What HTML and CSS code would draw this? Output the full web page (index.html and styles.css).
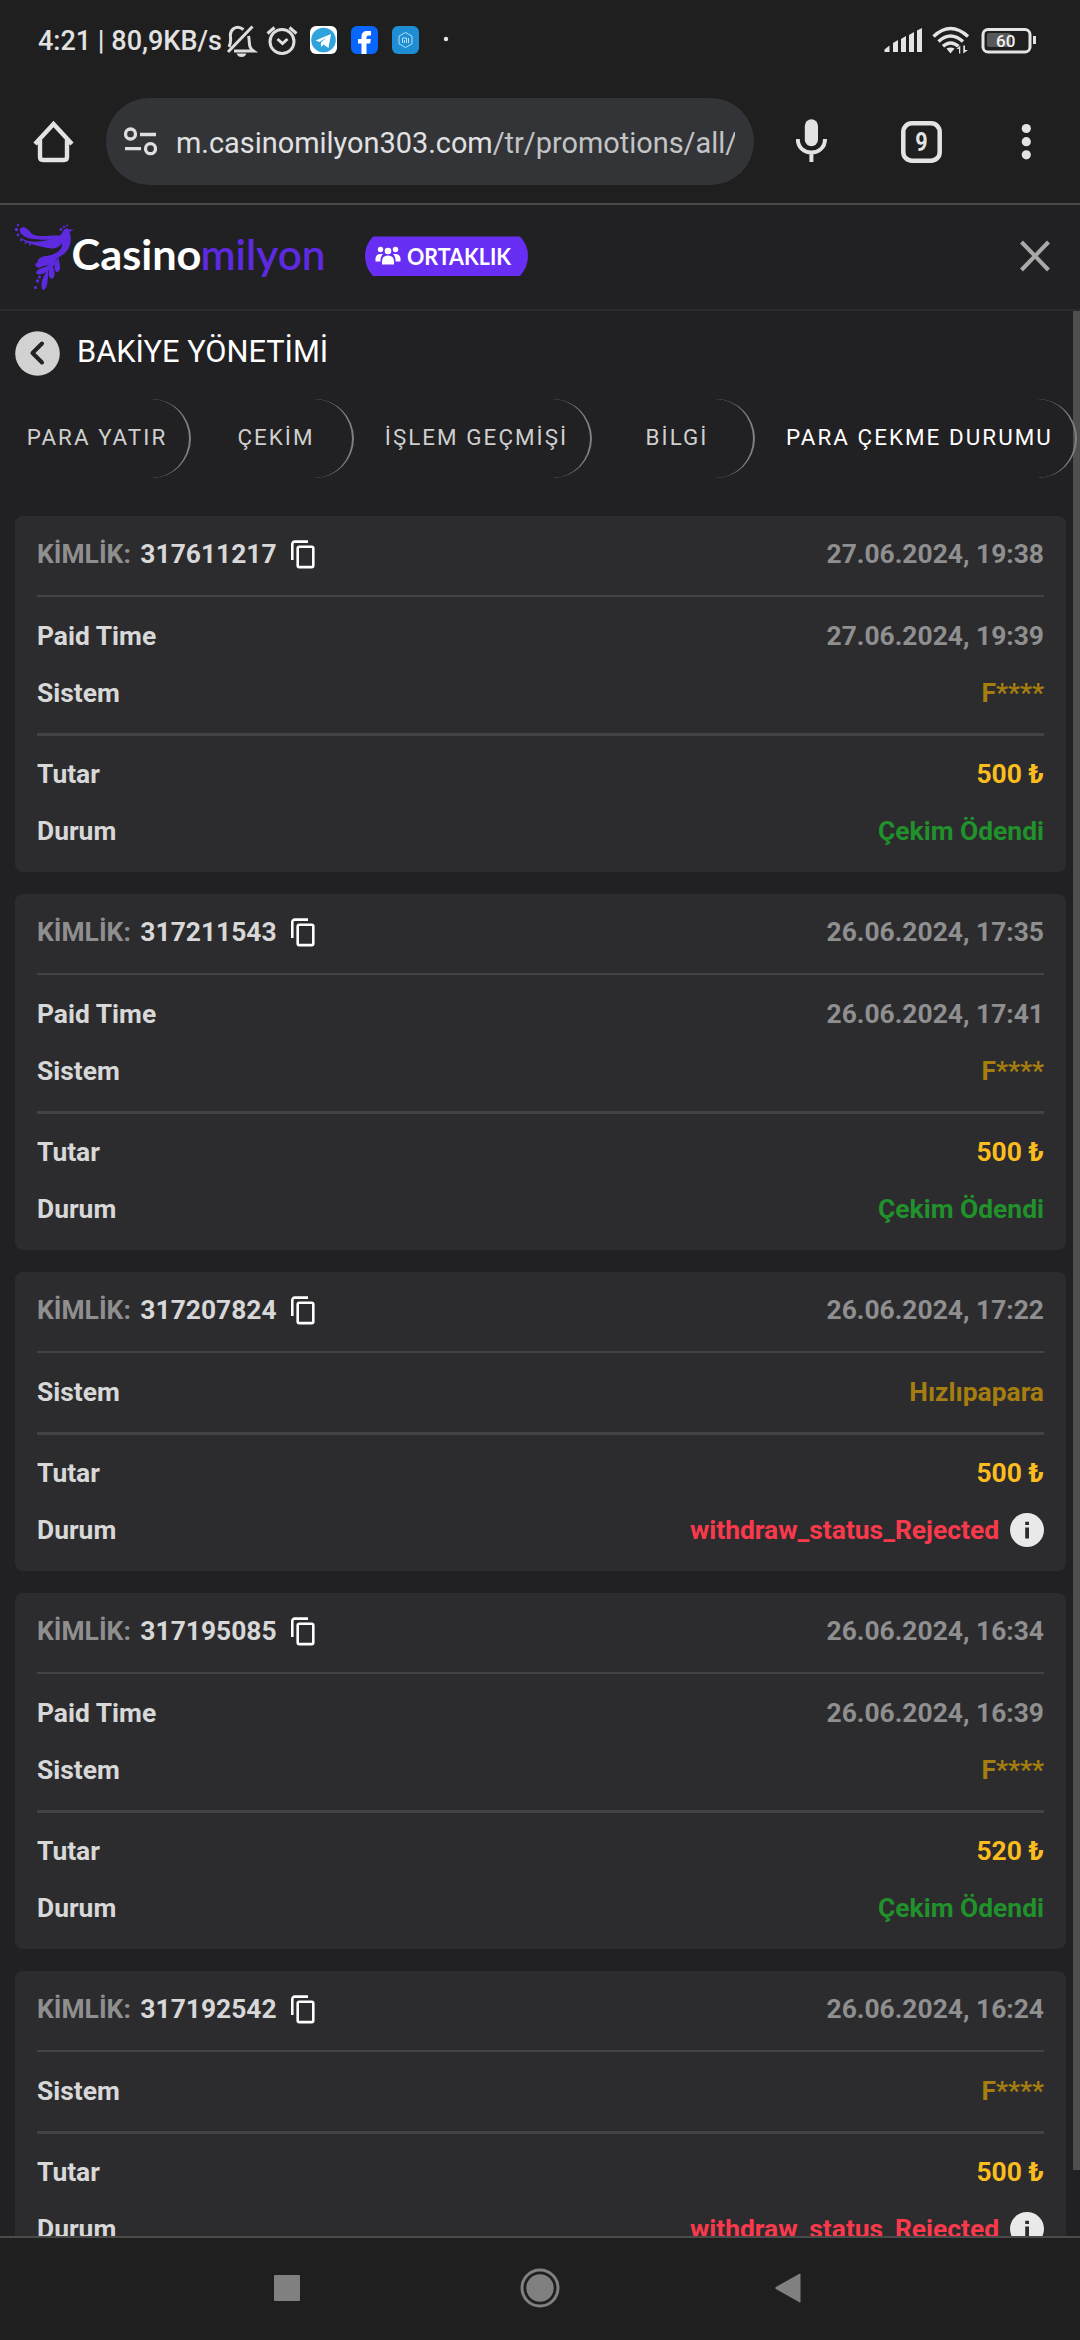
FILE: index.html
```html
<!DOCTYPE html>
<html lang="tr">
<head>
<meta charset="utf-8">
<title>Bakiye Yönetimi</title>
<link rel="stylesheet" href="styles.css">
</head>
<body>
<svg class="defs" aria-hidden="true">
  <symbol id="copy" viewBox="0 0 24 29">
    <path d="M1.3 20V4a2.4 2.4 0 0 1 2.4-2.4H17" fill="none" stroke="#fff" stroke-width="2.6"/>
    <rect x="6.7" y="6.7" width="15.6" height="20.4" rx="1.6" fill="none" stroke="#fff" stroke-width="2.6"/>
  </symbol>
  <symbol id="info" viewBox="0 0 34 34">
    <circle cx="17" cy="17" r="17" fill="#e9e9e9"/>
    <path d="M15.2 8.7h3.8v3.2h-3.8zM15.2 14.4h3.8v11h-3.8z" fill="#2c2c2e"/>
  </symbol>
</svg>
<div class="screen">
  <div class="status">
    <span class="clock">4:21 | 80,9KB/s</span>
    <svg class="notif" width="230" height="40" viewBox="220 20 230 40">
      <g fill="none" stroke="#dedede" stroke-width="3">
        <path d="M234 51H253.500C248 47 250 43 248.600 36M243.500 29.500C236 24 229.500 30 230.500 37C231 42 230.500 44 229 47"/>
        <path d="M228 52L252.500 26.500"/>
        <circle cx="282" cy="41.500" r="12"/>
        <path d="M267.500 33.500L274.500 27.500M289.500 27.500L296.500 33.500M277.500 39L282.500 43.500L287.500 39"/>
      </g>
      <path d="M236.500 53.500H246.500Q245 57 241.500 57Q238 57 236.500 53.500Z" fill="#dedede"/>
      <rect x="310" y="26" width="27" height="28" rx="6" fill="#fff"/>
      <circle cx="323.500" cy="40" r="12.300" fill="#2fa3db"/>
      <path d="M315.500 40.500L331 34L328.500 48L323.500 44.500L321 47V42.500L326.500 37.500L319.500 42Z" fill="#fff"/>
      <rect x="351" y="26" width="27" height="28" rx="6" fill="#0866ff"/>
      <path d="M361.500 54V43.500H358V39H361.500V36.500Q361.500 31 367 31H371V35.500H368.500Q366.500 35.500 366.500 37.500V39H370.800L370.200 43.500H366.500V54Z" fill="#fff"/>
      <rect x="392" y="26" width="27" height="28" rx="6" fill="#1d8ed3"/>
      <g fill="none" stroke="#b9e2fa">
        <path d="M405.500 32.500L412 36.200V43.800L405.500 47.500L399 43.800V36.200Z" stroke-width="1"/>
        <path d="M402.500 43V38H406.500V43M404.500 40V43M408.500 38V43" stroke-width="1"/>
      </g>
      <circle cx="446" cy="39" r="2.200" fill="#e6e6e6"/>
    </svg>
    <svg class="signals" width="156" height="32" viewBox="882 25 156 32">
      <g fill="#e4e4e4">
        <path d="M884.500 52V49.500L889.500 45.500V52ZM893 52V43L898 40V52ZM901 52V39L906 36V52ZM909 52V35L914 32V52ZM917 52V30.500L922 28V52Z"/>
        <path d="M946.500 48.500Q950.500 46.500 954.500 48.500L950.500 53.500Z"/>
        <path d="M959 53.500V49H956.500L960.300 45.500V53.500ZM963.300 53.500V45.500H965V50H968Z"/>
      </g>
      <g fill="none" stroke="#e4e4e4" stroke-width="3.400">
        <path d="M933.500 36.500Q950.500 20.500 968 36.500M938.500 41.500Q950.500 30.500 963 41.500M943 46.300Q950.500 39.500 958.500 46.300"/>
        <rect x="983" y="29.500" width="47" height="22.500" rx="5" stroke-width="3"/>
        <path d="M1034.500 36V44" stroke-width="3"/>
      </g>
      <rect x="987" y="33" width="24" height="14" rx="2" fill="#585858"/>
      <text x="996" y="47.300" textLength="19.500" class="battery">60</text>
    </svg>
  </div>

  <div class="toolbar">
    <svg class="home" width="42" height="44" viewBox="33 120 42 44">
      <path d="M35 144L53.500 124L72 144M40 140V157Q40 160 43 160H64Q67 160 67 157V140" fill="none" stroke="#e3e3e3" stroke-width="4.400"/>
    </svg>
    <div class="url">
      <svg width="34" height="30" viewBox="123 127 34 30">
        <g fill="none" stroke="#dfdfdf" stroke-width="3.300">
          <circle cx="130.500" cy="134" r="5"/><circle cx="150.500" cy="148.700" r="5"/>
          <path d="M140 134.500H156M125 148.700H141"/>
        </g>
      </svg>
      <span class="address">m.casinomilyon303.com<span class="path">/tr/promotions/all/</span></span>
    </div>
    <svg class="mic" width="32" height="44" viewBox="796 119 32 44">
      <rect x="804.800" y="119.300" width="13.200" height="27" rx="6.600" fill="#e3e3e3"/>
      <path d="M797.800 139C797.800 157 825 157 825 139M811.400 152V162" fill="none" stroke="#e3e3e3" stroke-width="4"/>
    </svg>
    <svg class="tabcount" width="41" height="42" viewBox="0 0 41 42">
      <rect x="2.300" y="2.300" width="36.400" height="37.400" rx="8.500" fill="none" stroke="#e3e3e3" stroke-width="4.500"/>
      <text x="14.300" y="29.800" textLength="12.400" lengthAdjust="spacingAndGlyphs">9</text>
    </svg>
    <svg class="more" width="10" height="38" viewBox="1021 123 10 38">
      <g fill="#e3e3e3"><circle cx="1026.300" cy="128.500" r="4.600"/><circle cx="1026.300" cy="141.700" r="4.600"/><circle cx="1026.300" cy="154.800" r="4.600"/></g>
    </svg>
  </div>

  <div class="site">
    <header class="brand">
      <svg width="520" height="80" viewBox="10 217 520 80">
        <g fill="#5d2ae0">
          <path d="M20 229C23 225 28 229 31 233C37 239 53 234 62 236C57 241 43 240 32 239C23 237 19 233 20 229Z"/>
          <path d="M20 237C30 245 45 241 56 238C62 235.500 62 232 64 230C66 227.500 68 228.500 69 229.500L74 229.500L69.500 232C72 239 71 247 65 253C59 259 46 261 39 267C35 261 39 257 46 256C55 255 63 250 62 243C58 250 50 249 43 247C31 244 24 243 20 237Z"/>
          <path d="M35 264C42 259 53 260 57 256C58 262 50 266 43 266C39 269 36 268 35 264Z"/>
          <path d="M36 272C41 266 49 268 54 261L56 263C50 270 43 276 37 274Z"/>
          <path d="M42 289C40 281 44 275 48 270C48 278 48 287 44 290Z"/>
          <path d="M49 269C47 278 52 281 54 277C56 273 53 268 52 264Z"/>
          <path d="M55 262C53 270 56 274 59 271C62 267 58 262 59 257Z"/>
          <circle cx="16.500" cy="229.500" r="1.700"/><circle cx="18" cy="225" r="1.200"/><circle cx="18" cy="235" r="1.400"/><circle cx="21" cy="240" r="1.200"/><circle cx="25.500" cy="243" r="1"/><circle cx="30" cy="244.500" r="1"/>
          <circle cx="61" cy="229.500" r="1.400"/><circle cx="64" cy="227" r="1.200"/><circle cx="67" cy="225.500" r="1"/>
          <circle cx="39.500" cy="277" r="1.500"/><circle cx="37.500" cy="281" r="1.700"/><circle cx="35.500" cy="287.500" r="1.500"/>
        </g>
        <text x="71.500" y="270" textLength="130" lengthAdjust="spacingAndGlyphs" class="logo logo-a">Casino</text>
        <text x="200.500" y="270" textLength="125" lengthAdjust="spacingAndGlyphs" class="logo logo-b">milyon</text>
        <path d="M373 236.500H520Q528 245 528 256Q528 267 520 276H373Q365 267 365 256Q365 245 373 236.500Z" fill="#692ef4"/>
        <g fill="#fff">
          <circle cx="388" cy="251" r="3.300"/><circle cx="380.500" cy="249.500" r="2.700"/><circle cx="395.500" cy="249.500" r="2.700"/>
          <path d="M382 264.500V261.500Q382 255.500 388 255.500Q394 255.500 394 261.500V264.500Z"/>
          <path d="M375.500 261.500Q374.500 254 380.500 254H383Q380 257 380.500 261.500ZM400.500 261.500Q401.500 254 395.500 254H393Q396 257 395.500 261.500Z"/>
        </g>
        <text x="407" y="264.500" textLength="104" lengthAdjust="spacingAndGlyphs" class="partner">ORTAKLIK</text>
      </svg>
      <svg width="32" height="32" viewBox="0 0 32 32"><path d="M2.500 2L29.500 30M29.500 2L2.500 30" stroke="#a9a9a9" stroke-width="4" fill="none"/></svg>
    </header>

    <main class="panel">
      <div class="heading">
        <svg width="45" height="45" viewBox="0 0 45 45"><circle cx="22.500" cy="22.500" r="22.300" fill="#d2d2d2"/><path d="M27 12.500L17.500 22L27 31.500" fill="none" stroke="#222" stroke-width="4" stroke-linecap="round" stroke-linejoin="round"/></svg>
        <h1>BAKİYE YÖNETİMİ</h1>
      </div>
      <nav class="tabs">
        <a>PARA YATIR</a><a>ÇEKİM</a><a>İŞLEM GEÇMİŞİ</a><a>BİLGİ</a><a class="active">PARA ÇEKME DURUMU</a>
      </nav>
      <div class="cards">
        <section class="card">
          <div class="group"><div class="row"><span><i>KİMLİK:</i> 317611217<svg class="copy"><use href="#copy"/></svg></span><span class="date">27.06.2024, 19:38</span></div></div>
          <div class="group"><div class="row"><span>Paid Time</span><span class="date">27.06.2024, 19:39</span></div><div class="row"><span>Sistem</span><span class="system">F****</span></div></div>
          <div class="group"><div class="row"><span>Tutar</span><span class="amount">500 ₺</span></div><div class="row"><span>Durum</span><span class="paid">Çekim Ödendi</span></div></div>
        </section>
        <section class="card">
          <div class="group"><div class="row"><span><i>KİMLİK:</i> 317211543<svg class="copy"><use href="#copy"/></svg></span><span class="date">26.06.2024, 17:35</span></div></div>
          <div class="group"><div class="row"><span>Paid Time</span><span class="date">26.06.2024, 17:41</span></div><div class="row"><span>Sistem</span><span class="system">F****</span></div></div>
          <div class="group"><div class="row"><span>Tutar</span><span class="amount">500 ₺</span></div><div class="row"><span>Durum</span><span class="paid">Çekim Ödendi</span></div></div>
        </section>
        <section class="card">
          <div class="group"><div class="row"><span><i>KİMLİK:</i> 317207824<svg class="copy"><use href="#copy"/></svg></span><span class="date">26.06.2024, 17:22</span></div></div>
          <div class="group"><div class="row"><span>Sistem</span><span class="system">Hızlıpapara</span></div></div>
          <div class="group"><div class="row"><span>Tutar</span><span class="amount">500 ₺</span></div><div class="row"><span>Durum</span><span class="rejected">withdraw_status_Rejected<svg class="info"><use href="#info"/></svg></span></div></div>
        </section>
        <section class="card">
          <div class="group"><div class="row"><span><i>KİMLİK:</i> 317195085<svg class="copy"><use href="#copy"/></svg></span><span class="date">26.06.2024, 16:34</span></div></div>
          <div class="group"><div class="row"><span>Paid Time</span><span class="date">26.06.2024, 16:39</span></div><div class="row"><span>Sistem</span><span class="system">F****</span></div></div>
          <div class="group"><div class="row"><span>Tutar</span><span class="amount">520 ₺</span></div><div class="row"><span>Durum</span><span class="paid">Çekim Ödendi</span></div></div>
        </section>
        <section class="card">
          <div class="group"><div class="row"><span><i>KİMLİK:</i> 317192542<svg class="copy"><use href="#copy"/></svg></span><span class="date">26.06.2024, 16:24</span></div></div>
          <div class="group"><div class="row"><span>Sistem</span><span class="system">F****</span></div></div>
          <div class="group"><div class="row"><span>Tutar</span><span class="amount">500 ₺</span></div><div class="row"><span>Durum</span><span class="rejected">withdraw_status_Rejected<svg class="info"><use href="#info"/></svg></span></div></div>
        </section>
      </div>
      <div class="scrollbar"></div>
    </main>
  </div>

  <div class="navbar">
    <svg width="26" height="26" viewBox="0 0 26 26"><rect width="26" height="26" rx="1" fill="#808080"/></svg>
    <svg width="40" height="40" viewBox="0 0 40 40"><circle cx="20" cy="20" r="18" fill="none" stroke="#808080" stroke-width="3"/><circle cx="20" cy="20" r="13.700" fill="#808080"/></svg>
    <svg width="26" height="30" viewBox="0 0 26 30"><path d="M25.500 1V29Q25 30 24 29L.8 16Q0 15 .8 14L24 1Q25 0 25.500 1Z" fill="#808080"/></svg>
  </div>
</div>
</body>
</html>
```
FILE: styles.css
```css
* { box-sizing: border-box; }
body { margin: 0; background: #1f1f1f; font-family: Roboto, "Noto Sans", sans-serif; }
svg { display: block; flex: none; }
.defs { position: absolute; width: 0; height: 0; }
.screen { width: 1080px; height: 2340px; display: flex; flex-direction: column; overflow: hidden; }

.status { height: 80px; padding: 0 42px 0 38px; display: flex; align-items: flex-start; flex: none; color: #e2e2e2; }
.clock { width: 182px; height: 80px; line-height: 82px; font-size: 27px; font-weight: 500; white-space: nowrap; }
.notif { margin-top: 20px; }
.signals { margin: 25px 0 0 auto; }
.battery { font: 500 17px Roboto, sans-serif; fill: #f2f2f2; }

.toolbar { height: 125px; flex: none; padding: 18px 48px 0 33px; display: flex; align-items: flex-start; border-bottom: 2px solid #4a4a4b; }
.home { margin-top: 22px; }
.url { width: 648px; height: 87px; margin: 0 42px 0 31px; padding: 0 19px 0 17px; border-radius: 44px; background: #333438; display: flex; align-items: center; gap: 19px; }
.address { width: 560px; padding-top: 2px; overflow: hidden; white-space: nowrap; font-size: 28.900px; line-height: 44px; color: #e1e1e1; }
.path { color: #c3c4c5; }
.mic { margin-top: 21px; }
.tabcount { margin: 23px 79px 0 73px; font: 700 25.500px Roboto, sans-serif; fill: #e3e3e3; }
.more { margin-top: 25px; }

.site { height: 2031px; flex: none; background: #212123; display: flex; flex-direction: column; overflow: hidden; }
.brand { height: 106px; flex: none; padding: 12px 29px 0 10px; display: flex; justify-content: space-between; border-bottom: 2px solid #2b2b2d; }
.brand svg:last-child { margin-top: 23px; }
.logo { font: 700 42px Lato, sans-serif; }
.logo-a { fill: #fff; }
.logo-b { fill: #5d2ae0; font-weight: 600; }
.partner { font: 700 22.500px Lato, sans-serif; fill: #fff; }

.panel { position: relative; flex: 1; min-height: 0; overflow: hidden; }
.heading { height: 88px; padding: 20px 15px 0; display: flex; gap: 17px; color: #fff; }
h1 { margin: 0; font-size: 30.800px; line-height: 42px; font-weight: 400; white-space: nowrap; }
.tabs { position: relative; z-index: 1; width: 1077px; display: grid; grid-template-columns: 191px 163px 238px 163px 322px; }
.tabs a { height: 79px; padding-left: 9px; border-right: 2px solid #808081; border-radius: 0 40px 40px 0; line-height: 77px; text-align: center; white-space: nowrap; font-size: 22.400px; letter-spacing: 2.050px; color: #cfcfcf; }
.tabs a:first-child { padding-left: 5px; }
.tabs .active { color: #fff; }
.cards { padding: 38px 14px 0 15px; display: flex; flex-direction: column; gap: 22px; }
.card { padding: 0 22px; background: #2c2c2e; border-radius: 8px; font-size: 26.400px; font-weight: 700; color: #d8d8d8; }
.group { padding: 9px 0 13px; border-top: 3px solid #434345; }
.group:first-child { border-top: 0; }
.group:nth-child(2) { padding: 10px 0 12px; border-top-width: 2px; }
.row { height: 57px; display: flex; justify-content: space-between; align-items: center; white-space: pre; }
.row > span { display: flex; align-items: center; }
.row i { margin-right: 3px; font-style: normal; color: #8f8f90; }
.copy { width: 24px; height: 29px; margin: 2px 0 0 14px; }
.info { width: 34px; height: 34px; margin-left: 11px; }
.row .date { color: #8f8f90; }
.row .system { color: #a67d0f; }
.row .amount { color: #fbbd1e; }
.row .paid { color: #20912b; }
.row .rejected { color: #fb394c; }
.scrollbar { position: absolute; top: 0; right: 0; width: 7px; height: 1859px; background: #4f4f50; }

.navbar { height: 104px; flex: none; border-top: 2px solid #4a4a4b; padding: 0 279px 2px 274px; display: flex; justify-content: space-between; align-items: center; }
.navbar svg:nth-child(2) { margin-left: 5px; }
```
